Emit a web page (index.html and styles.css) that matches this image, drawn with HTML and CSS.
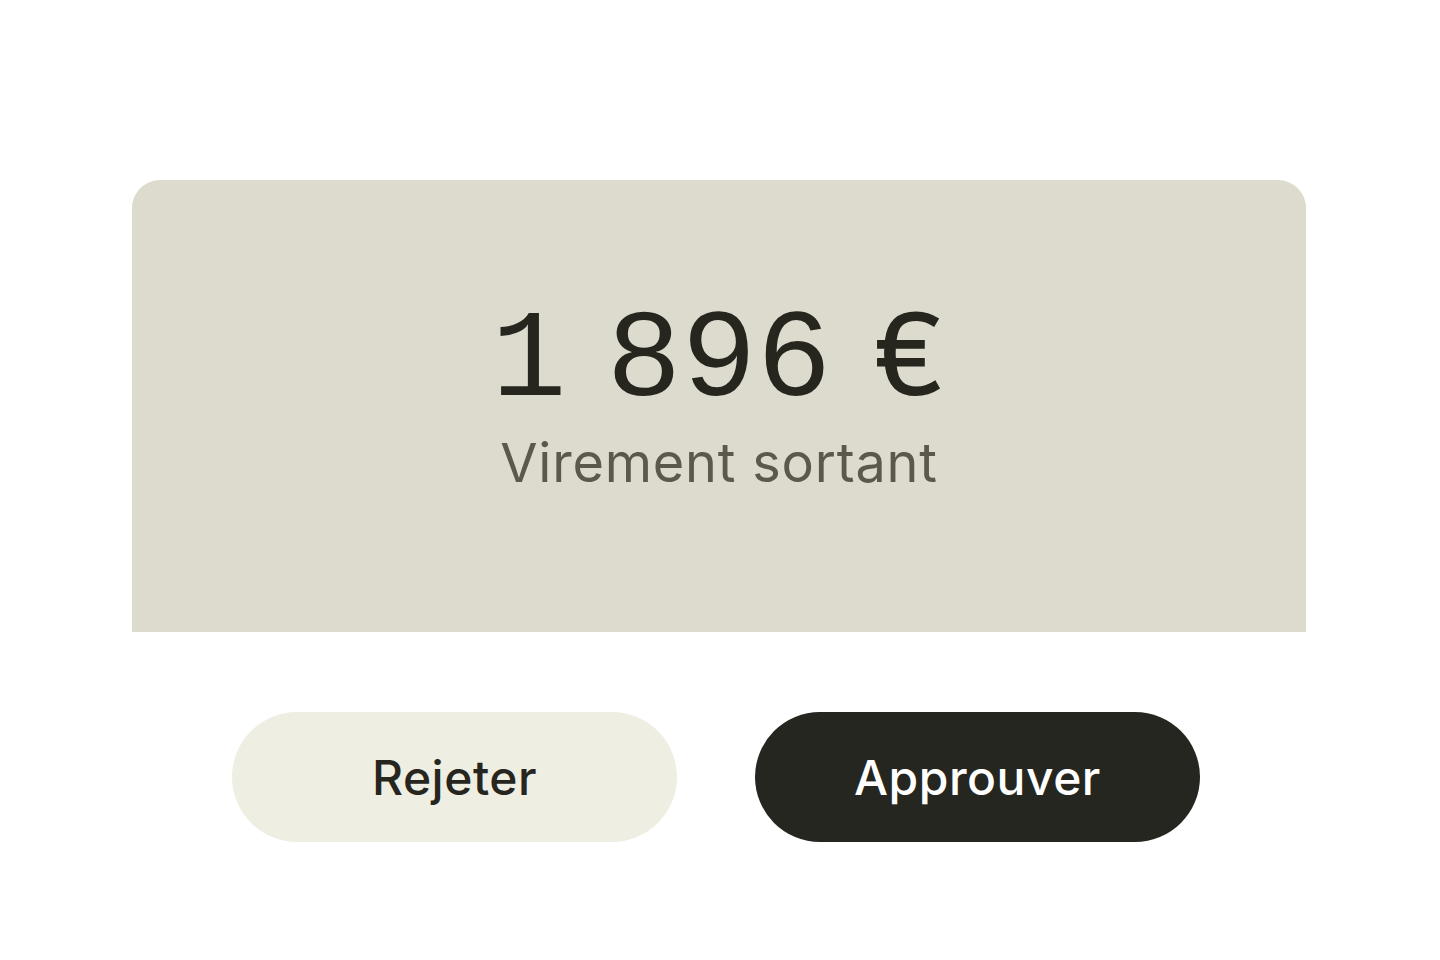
FILE: index.html
```html
<!DOCTYPE html>
<html lang="fr">
<head>
    <meta charset="UTF-8">
    <meta name="viewport" content="width=device-width, initial-scale=1.0">
    <title>Virement</title>
    <link rel="stylesheet" href="styles.css">
</head>
<body>

<div class="transfer-card">
    <div class="amount">1 896 €</div>
    <div class="label">Virement sortant</div>
</div>

<div class="actions">
    <button type="button" class="btn btn-reject">Rejeter</button>
    <button type="button" class="btn btn-approve">Approuver</button>
</div>

</body>
</html>
```

FILE: styles.css
```css
/* Reset */
* {
    margin: 0;
    padding: 0;
    box-sizing: border-box;
}

body {
    background-color: #ffffff;
    font-family: Inter, "Noto Sans", sans-serif;
    color: #26261f;
}

/* Card */
.transfer-card {
    margin: 180px 0 0 132px;
    width: 1174px;
    height: 452px;
    padding-top: 120px;
    background-color: #dddbce;
    border-radius: 28px 28px 0 0;
    display: flex;
    flex-direction: column;
    align-items: center;
}

.amount {
    font-family: "Liberation Mono", "DejaVu Sans Mono", monospace;
    font-size: 125px;
    line-height: 1;
    word-spacing: -35px;
    color: #26261f;
}

.label {
    margin-top: 11px;
    font-size: 54px;
    line-height: 1;
    letter-spacing: 0.8px;
    color: #5b584e;
}

/* Buttons */
.actions {
    display: flex;
    gap: 78px;
    margin: 80px 0 0 232px;
}

.btn {
    width: 445px;
    height: 130px;
    border: none;
    border-radius: 65px;
    font-family: Inter, "Noto Sans", sans-serif;
    font-size: 48px;
    font-weight: 500;
    letter-spacing: 0.5px;
    cursor: pointer;
}

.btn-reject {
    background-color: #eeeee3;
    color: #26261f;
}

.btn-approve {
    background-color: #262620;
    color: #ffffff;
}
```
